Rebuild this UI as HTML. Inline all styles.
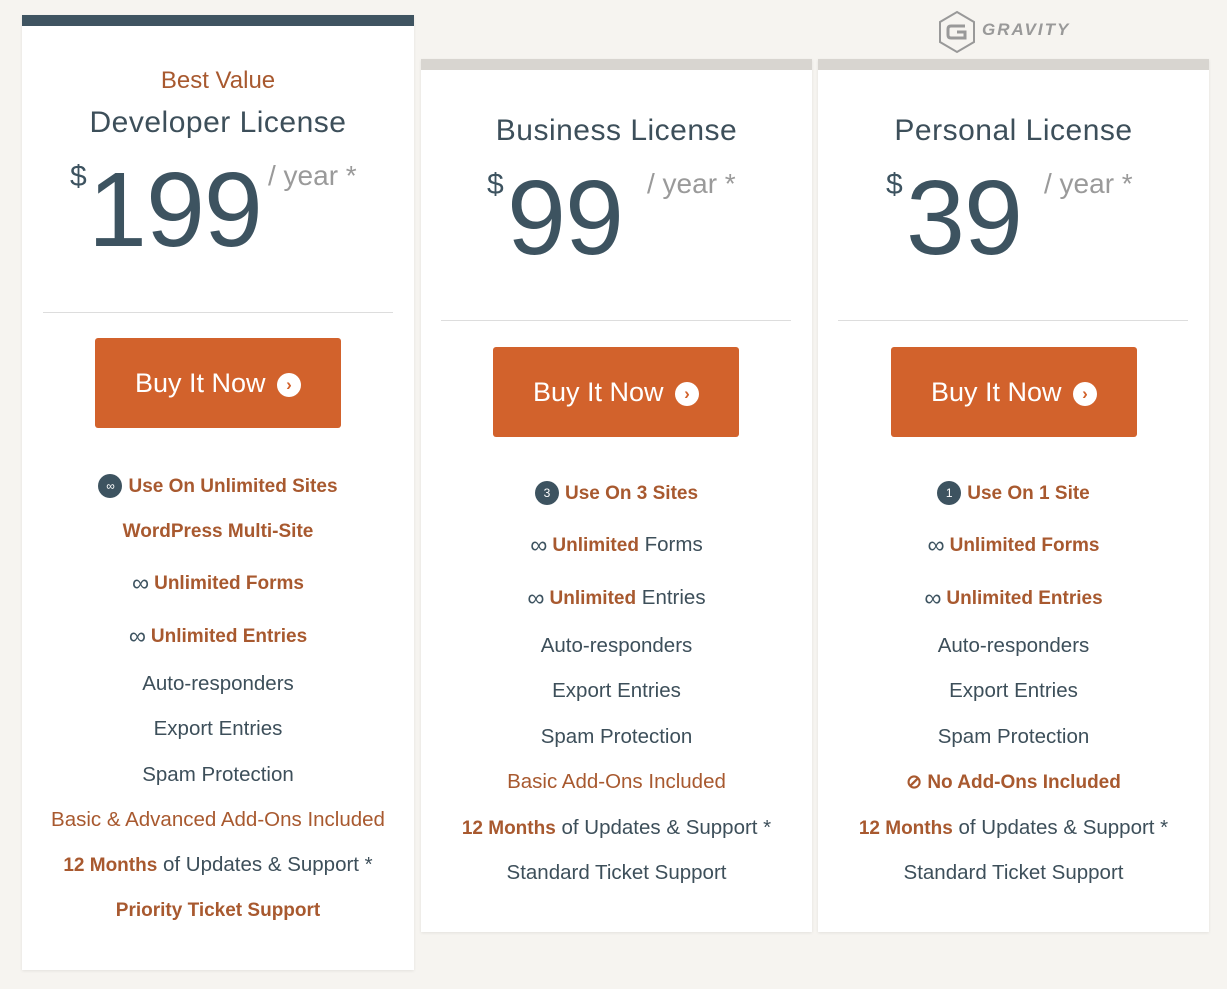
<!DOCTYPE html>
<html><head><meta charset="utf-8"><style>
*{margin:0;padding:0;box-sizing:border-box}
body{width:1227px;height:989px;background:#f6f4f0;font-family:"Liberation Sans",sans-serif;position:relative;overflow:hidden}
.card{position:absolute;background:#fff;box-shadow:0 1px 3px rgba(0,0,0,.08)}
.bar{position:absolute;height:11px}
.t{position:absolute;text-align:center;white-space:nowrap;line-height:26px;font-size:20.5px;color:#3d4f5a}
.o{color:#a8592f}
.b{font-weight:bold;color:#a8592f;font-size:19px}
.hr{position:absolute;height:1px;background:#ddd}
.btn{position:absolute;background:#d2622c;border-radius:3px;color:#fff;font-size:27px;text-align:center;line-height:90px}
.arr{display:inline-block;width:24px;height:24px;border-radius:50%;background:#fff;color:#d2622c;font-size:17px;line-height:24px;font-weight:bold;vertical-align:2px;margin-left:4px}
.cir{display:inline-block;width:24px;height:24px;border-radius:50%;background:#3d5360;color:#fff;font-size:12px;line-height:24px;vertical-align:2px;margin-right:6px;text-align:center}
.inf{color:#3d5360;font-size:24px;margin-right:5px;vertical-align:-2px}
.price{position:absolute;white-space:nowrap;color:#3d5360}
.price .d{position:absolute;font-size:30px}
.price .n{position:absolute;font-size:106px;line-height:112px;letter-spacing:-1px}
.price .y{position:absolute;font-size:28px;color:#9a9a9a}
</style></head><body>

<div class="card" style="left:22px;top:15px;width:392px;height:955px"></div>
<div class="bar" style="left:22px;top:15px;width:392px;background:#3f5461"></div>
<div class="card" style="left:421px;top:59px;width:391px;height:873px"></div>
<div class="bar" style="left:421px;top:59px;width:391px;background:#d8d5d0"></div>
<div class="card" style="left:818px;top:59px;width:391px;height:873px"></div>
<div class="bar" style="left:818px;top:59px;width:391px;background:#d8d5d0"></div>

<!-- logo -->
<svg style="position:absolute;left:937px;top:10px" width="40" height="44" viewBox="0 0 40 44"><path d="M20 2 L37 12 L37 32 L20 42 L3 32 L3 12Z" fill="none" stroke="#999" stroke-width="2"/><path d="M28 16 H14 Q11 16 11 19 V25 Q11 28 14 28 H28 V22 H20" fill="none" stroke="#999" stroke-width="3"/></svg>
<div style="position:absolute;left:982px;top:20px;font-size:17px;color:#999;letter-spacing:2px;font-style:italic;font-weight:bold">GRAVITY</div>

<!-- col1 -->
<div class="t o" style="left:22px;width:392px;top:67px;font-size:24px;line-height:28px">Best Value</div>
<div class="t" style="left:22px;width:392px;top:107px;font-size:30px;line-height:32px;letter-spacing:.5px">Developer License</div>
<div class="price" style="left:70px;top:150px"><span class="d" style="left:0;top:10px">$</span><span class="n" style="left:18px;top:4px">199</span><span class="y" style="left:198px;top:10px">/ year *</span></div>
<div class="hr" style="left:43px;top:312px;width:350px"></div>
<div class="btn" style="left:95px;top:338px;width:246px;height:90px">Buy It Now <span class="arr">›</span></div>
<div class="t" style="left:22px;width:392px;top:473px"><span class="cir">∞</span><span class="b">Use On Unlimited Sites</span></div>
<div class="t" style="left:22px;width:392px;top:518px"><span class="b">WordPress Multi-Site</span></div>
<div class="t" style="left:22px;width:392px;top:570px"><span class="inf">∞</span><span class="b">Unlimited Forms</span></div>
<div class="t" style="left:22px;width:392px;top:623px"><span class="inf">∞</span><span class="b">Unlimited Entries</span></div>
<div class="t" style="left:22px;width:392px;top:671px">Auto-responders</div>
<div class="t" style="left:22px;width:392px;top:716px">Export Entries</div>
<div class="t" style="left:22px;width:392px;top:762px">Spam Protection</div>
<div class="t o" style="left:22px;width:392px;top:807px">Basic &amp; Advanced Add-Ons Included</div>
<div class="t" style="left:22px;width:392px;top:852px"><span class="b">12 Months</span> of Updates &amp; Support *</div>
<div class="t" style="left:22px;width:392px;top:897px"><span class="b">Priority Ticket Support</span></div>

<!-- col2 -->
<div class="t" style="left:421px;width:391px;top:115px;font-size:30px;line-height:32px;letter-spacing:.5px">Business License</div>
<div class="price" style="left:487px;top:158px"><span class="d" style="left:0;top:10px">$</span><span class="n" style="left:20px;top:4px">99</span><span class="y" style="left:160px;top:10px">/ year *</span></div>
<div class="hr" style="left:441px;top:320px;width:350px"></div>
<div class="btn" style="left:493px;top:347px;width:246px;height:90px">Buy It Now <span class="arr">›</span></div>
<div class="t" style="left:421px;width:391px;top:480px"><span class="cir">3</span><span class="b">Use On 3 Sites</span></div>
<div class="t" style="left:421px;width:391px;top:532px"><span class="inf">∞</span><span class="b">Unlimited</span> Forms</div>
<div class="t" style="left:421px;width:391px;top:585px"><span class="inf">∞</span><span class="b">Unlimited</span> Entries</div>
<div class="t" style="left:421px;width:391px;top:633px">Auto-responders</div>
<div class="t" style="left:421px;width:391px;top:678px">Export Entries</div>
<div class="t" style="left:421px;width:391px;top:724px">Spam Protection</div>
<div class="t o" style="left:421px;width:391px;top:769px">Basic Add-Ons Included</div>
<div class="t" style="left:421px;width:391px;top:815px"><span class="b">12 Months</span> of Updates &amp; Support *</div>
<div class="t" style="left:421px;width:391px;top:860px">Standard Ticket Support</div>

<!-- col3 -->
<div class="t" style="left:818px;width:391px;top:115px;font-size:30px;line-height:32px;letter-spacing:.5px">Personal License</div>
<div class="price" style="left:886px;top:158px"><span class="d" style="left:0;top:10px">$</span><span class="n" style="left:20px;top:4px">39</span><span class="y" style="left:158px;top:10px">/ year *</span></div>
<div class="hr" style="left:838px;top:320px;width:350px"></div>
<div class="btn" style="left:891px;top:347px;width:246px;height:90px">Buy It Now <span class="arr">›</span></div>
<div class="t" style="left:818px;width:391px;top:480px"><span class="cir">1</span><span class="b">Use On 1 Site</span></div>
<div class="t" style="left:818px;width:391px;top:532px"><span class="inf">∞</span><span class="b">Unlimited Forms</span></div>
<div class="t" style="left:818px;width:391px;top:585px"><span class="inf">∞</span><span class="b">Unlimited Entries</span></div>
<div class="t" style="left:818px;width:391px;top:633px">Auto-responders</div>
<div class="t" style="left:818px;width:391px;top:678px">Export Entries</div>
<div class="t" style="left:818px;width:391px;top:724px">Spam Protection</div>
<div class="t" style="left:818px;width:391px;top:769px"><span class="b">⊘ No Add-Ons Included</span></div>
<div class="t" style="left:818px;width:391px;top:815px"><span class="b">12 Months</span> of Updates &amp; Support *</div>
<div class="t" style="left:818px;width:391px;top:860px">Standard Ticket Support</div>
</body></html>
